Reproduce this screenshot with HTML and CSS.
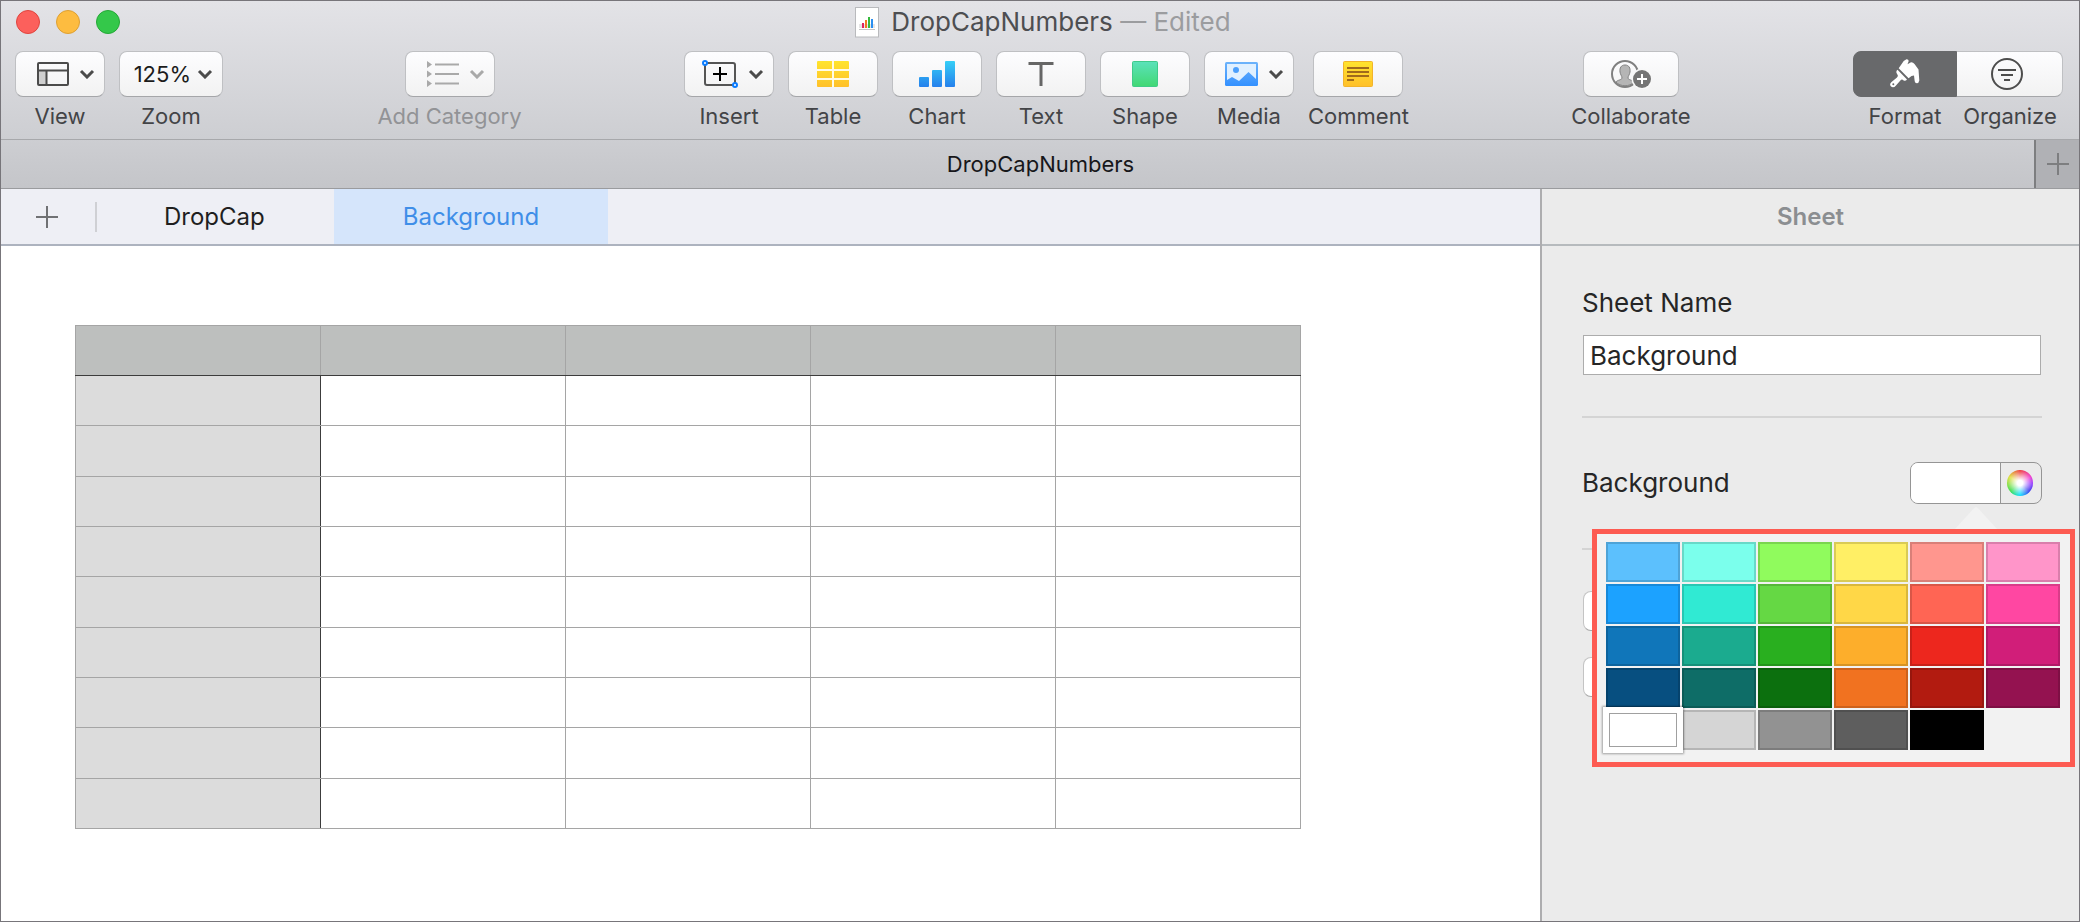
FILE: index.html
```html
<!DOCTYPE html>
<html lang="en">
<head>
<meta charset="utf-8">
<title>DropCapNumbers</title>
<link rel="stylesheet" href="styles.css">
</head>
<body>
<div class="window">
  <header class="chrome">
    <div class="titlebar">
      <div class="lights">
        <button class="light light-close" aria-label="Close"></button>
        <button class="light light-min" aria-label="Minimize"></button>
        <button class="light light-zoom" aria-label="Full screen"></button>
      </div>
      <h1 class="doc-title">
        <svg class="doc-icon" width="24" height="31" viewBox="0 0 24 31"><rect x=".5" y=".5" width="23" height="29.500" fill="#fff" stroke="#b9babd"/><path d="M4 17h16v4H4z" fill="#e6e6e6"/><rect x="7" y="16" width="2" height="5" fill="#e0245e"/><rect x="10" y="13" width="2" height="8" fill="#f07a22"/><rect x="13" y="10" width="2" height="11" fill="#35b93c"/><rect x="16" y="12" width="2" height="9" fill="#2b8ff0"/><path d="M4 22.500h16" stroke="#c4c4c4"/></svg>
        <span>DropCapNumbers <span class="edited">— Edited</span></span>
      </h1>
    </div>
    <div class="toolbar">
      <div class="tools tools-lead">
        <button class="tool"><span class="face face-menu"><svg width="32" height="24" viewBox="0 0 32 24" fill="none" stroke="#4b4b4b" stroke-width="2"><path d="M2 9h7v13H2z" fill="#cfcfcf" stroke="none"/><rect x="1" y="1" width="30" height="22" rx="1"/><path d="M1 8.500h30M9.500 8.500V23"/></svg><svg class="chev" viewBox="0 0 16 10"><path d="M2 2l6 6 6-6"/></svg></span><span class="tool-label">View</span></button>
        <button class="tool"><span class="face face-menu face-zoom">125%<svg class="chev" viewBox="0 0 16 10"><path d="M2 2l6 6 6-6"/></svg></span><span class="tool-label">Zoom</span></button>
      </div>
      <button class="tool tool-off" disabled><span class="face face-menu"><svg width="32" height="26" viewBox="0 0 32 26"><path d="M0 0l5 3.500L0 7zM0 9.500l5 3.500-5 3.500zM0 19l5 3.500L0 26z" fill="#a9a9a9"/><path d="M8 3.500h24M8 13h24M8 22.500h24" stroke="#a9a9a9" stroke-width="2"/></svg><svg class="chev" viewBox="0 0 16 10"><path d="M2 2l6 6 6-6"/></svg></span><span class="tool-label">Add Category</span></button>
      <div class="tools">
        <button class="tool"><span class="face face-menu"><svg width="36" height="28" viewBox="0 0 36 28" fill="none"><rect x="3" y="3" width="30" height="22" rx="2" stroke="#555" stroke-width="2"/><path d="M18 7v14M11 14h14" stroke="#000" stroke-width="2"/><circle cx="3" cy="3" r="2" fill="#fff" stroke="#0a7cff" stroke-width="2"/><circle cx="33" cy="25" r="2" fill="#fff" stroke="#0a7cff" stroke-width="2"/></svg><svg class="chev" viewBox="0 0 16 10"><path d="M2 2l6 6 6-6"/></svg></span><span class="tool-label">Insert</span></button>
        <button class="tool"><span class="face"><svg width="32" height="26" viewBox="0 0 32 26"><defs><linearGradient id="yellow" x2="0" y2="1"><stop stop-color="#ffe42e"/><stop offset="1" stop-color="#ffc02a"/></linearGradient></defs><rect width="32" height="26" rx="1" fill="url(#yellow)"/><path d="M0 9h32M0 18h32M16 0v26" stroke="#fffbe6" stroke-width="2"/></svg></span><span class="tool-label">Table</span></button>
        <button class="tool"><span class="face"><svg width="36" height="26" viewBox="0 0 36 26"><defs><linearGradient id="blue" gradientUnits="userSpaceOnUse" x1="0" y1="0" x2="0" y2="26"><stop stop-color="#36cff7"/><stop offset="1" stop-color="#2580ec"/></linearGradient></defs><g fill="url(#blue)"><rect y="16" width="10" height="10" rx="1"/><rect x="13" y="9" width="10" height="17" rx="1"/><rect x="26" width="10" height="26" rx="1"/></g></svg></span><span class="tool-label">Chart</span></button>
        <button class="tool"><span class="face"><svg width="26" height="24" viewBox="0 0 26 24"><path d="M.5 1.500h25M13 1.500V24" stroke="#666" stroke-width="3"/></svg></span><span class="tool-label">Text</span></button>
        <button class="tool"><span class="face"><svg width="26" height="26" viewBox="0 0 26 26"><defs><linearGradient id="green" x2="0" y2="1"><stop stop-color="#5be2bb"/><stop offset="1" stop-color="#41d873"/></linearGradient></defs><rect x=".5" y=".5" width="25" height="25" rx="1" fill="url(#green)" stroke="#3fcb8a"/></svg></span><span class="tool-label">Shape</span></button>
        <button class="tool"><span class="face face-menu"><svg width="33" height="24" viewBox="0 0 33 24"><defs><linearGradient id="sky" x2="0" y2="1"><stop stop-color="#6db3fb"/><stop offset="1" stop-color="#3390ff"/></linearGradient></defs><rect width="33" height="24" rx="1.500" fill="url(#sky)"/><path d="M2 2h29v15l-7.500-7-9.500 9-7-4-5 3z" fill="#e0f0ff"/><circle cx="11" cy="8" r="3" fill="#4b9ffc"/></svg><svg class="chev" viewBox="0 0 16 10"><path d="M2 2l6 6 6-6"/></svg></span><span class="tool-label">Media</span></button>
        <button class="tool"><span class="face"><svg width="30" height="26" viewBox="0 0 30 26"><rect x=".5" y=".5" width="29" height="25" rx="1" fill="url(#yellow)" stroke="#f2b42c"/><path d="M4 7h22M4 11h22M4 15h22M4 19h7" stroke="#a06a1c" stroke-width="2"/></svg></span><span class="tool-label">Comment</span></button>
      </div>
      <button class="tool"><span class="face face-collab"><svg width="40" height="30" viewBox="0 0 40 30"><circle cx="14" cy="15" r="13" fill="none" stroke="#808080" stroke-width="2"/><path d="M14 6c4 0 5.500 3 5 7-.3 2.500-2 4-2 6s5 2 6 4c-4 5-14 5-18 0 1-2 6-2 6-4s-1.700-3.500-2-6c-.5-4 1-7 5-7z" fill="#b5b5b5" stroke="#808080"/><circle cx="31" cy="20" r="10.500" fill="#f8f8f8"/><circle cx="31" cy="20" r="9" fill="#757575"/><path d="M31 15v10M26 20h10" stroke="#fff" stroke-width="2"/></svg></span><span class="tool-label">Collaborate</span></button>
      <div class="tools tools-joined">
        <button class="tool" aria-pressed="true"><span class="face face-on"><svg width="30" height="30" viewBox="0 0 30 30" fill="#fff"><path d="M8.700 9.300L13.700 2 16.500.2Q18.500 0 18.700 2L17.500 5.300 21 3.200Q23 3 24.500 5L28.500 10.500 29.300 21.500Q28.800 24.300 26.700 24.300 24.500 24 24.600 21.500L24 16.500 21.500 17 18.600 19.200Z"/><path d="M7.500 10.800L17 20.600Q15.500 22.400 13.600 21.500 12 19.800 10.600 21.200L6 26.500Q3.500 29.500 1 27.600-1 25.200 1.500 23L7 18.500Q8.600 17 7.200 15.300 5.300 12.800 7.500 10.800Z"/><circle cx="3.300" cy="25.300" r="1" fill="#68696b"/></svg></span><span class="tool-label">Format</span></button>
        <button class="tool" aria-pressed="false"><span class="face face-last"><svg width="32" height="32" viewBox="0 0 32 32" fill="none" stroke="#4d4d4d" stroke-width="2"><circle cx="16" cy="16" r="15"/><path d="M7 12h18M10 17h12M13 22h6"/></svg></span><span class="tool-label">Organize</span></button>
      </div>
    </div>
    <div class="tabbar">
      <span class="tab-title">DropCapNumbers</span>
      <button class="tab-add" aria-label="New tab"><svg width="22" height="22" viewBox="0 0 22 22"><path d="M11 0v22M0 11h22" stroke="#7d7e80" stroke-width="2"/></svg></button>
    </div>
  </header>
  <div class="workspace">
    <main class="editor">
      <nav class="sheets">
        <button class="sheet-add" aria-label="Add sheet"><svg width="22" height="22" viewBox="0 0 22 22"><path d="M11 0v22M0 11h22" stroke="#707174" stroke-width="2"/></svg></button>
        <button class="sheet">DropCap</button>
        <button class="sheet sheet-active">Background</button>
      </nav>
      <div class="canvas">
        <table class="grid">
          <thead><tr><th></th><th></th><th></th><th></th><th></th></tr></thead>
          <tbody>
            <tr><th></th><td></td><td></td><td></td><td></td></tr>
            <tr><th></th><td></td><td></td><td></td><td></td></tr>
            <tr><th></th><td></td><td></td><td></td><td></td></tr>
            <tr><th></th><td></td><td></td><td></td><td></td></tr>
            <tr><th></th><td></td><td></td><td></td><td></td></tr>
            <tr><th></th><td></td><td></td><td></td><td></td></tr>
            <tr><th></th><td></td><td></td><td></td><td></td></tr>
            <tr><th></th><td></td><td></td><td></td><td></td></tr>
            <tr><th></th><td></td><td></td><td></td><td></td></tr>
          </tbody>
        </table>
      </div>
    </main>
    <aside class="inspector">
      <h2 class="inspector-head">Sheet</h2>
      <div class="panel">
        <label class="field-label" for="sheet-name">Sheet Name</label>
        <input class="field" id="sheet-name" type="text" value="Background">
        <hr class="rule">
        <div class="color-row">
          <span class="field-label" id="bg-label">Background</span>
          <div class="well" role="group" aria-labelledby="bg-label">
            <button class="well-color" aria-label="Background color"></button>
            <button class="well-wheel" aria-label="Color wheel"><span class="wheel"></span></button>
          </div>
          <div class="popover">
            <div class="swatches">
              <button class="swatch c1"></button><button class="swatch c2"></button><button class="swatch c3"></button><button class="swatch c4"></button><button class="swatch c5"></button><button class="swatch c6"></button>
              <button class="swatch c7"></button><button class="swatch c8"></button><button class="swatch c9"></button><button class="swatch c10"></button><button class="swatch c11"></button><button class="swatch c12"></button>
              <button class="swatch c13"></button><button class="swatch c14"></button><button class="swatch c15"></button><button class="swatch c16"></button><button class="swatch c17"></button><button class="swatch c18"></button>
              <button class="swatch c19"></button><button class="swatch c20"></button><button class="swatch c21"></button><button class="swatch c22"></button><button class="swatch c23"></button><button class="swatch c24"></button>
              <button class="swatch swatch-selected"></button><button class="swatch c26"></button><button class="swatch c27"></button><button class="swatch c28"></button><button class="swatch c29"></button>
            </div>
          </div>
        </div>
        <hr class="rule">
        <button class="action" aria-label="Duplicate sheet"></button>
        <button class="action" aria-label="Delete sheet"></button>
      </div>
    </aside>
  </div>
</div>
</body>
</html>
```

FILE: styles.css
```css
* { box-sizing: border-box; }
body { margin: 0; font-family: Inter, "Liberation Sans", sans-serif; color: #262626; }
button { margin: 0; padding: 0; border: 0; background: none; font: inherit; color: inherit; }
h1, h2 { margin: 0; font-weight: 400; }
svg { display: block; flex: none; }

.window { min-height: 100vh; display: flex; flex-direction: column; border: 1px solid #77757a; background: #fff; }

.chrome { background: linear-gradient(#e3e3e7, #cdced2 138px, #c4c5c9); }
.titlebar { position: relative; display: flex; justify-content: center; align-items: center; height: 42px; padding-left: 6px; }
.lights { position: absolute; left: 15px; display: flex; gap: 16px; }
.light { width: 24px; height: 24px; border-radius: 50%; border: 1px solid; }
.light-close { background: #fc605c; border-color: #e0443e; }
.light-min { background: #fdbc40; border-color: #dea032; }
.light-zoom { background: #34c84a; border-color: #24a836; }
.doc-title { display: flex; align-items: center; gap: 12px; font-size: 26px; line-height: 32px; color: #4d4e51; }
.edited { color: #9b9c9f; }

.toolbar { display: flex; justify-content: space-between; padding: 8px 16px 0 14px; height: 96px; }
.tools { display: flex; gap: 14px; }
.tools-lead { margin-right: -8px; }
.tools-joined { gap: 0; }
.tool { display: flex; flex-direction: column; align-items: center; gap: 5px; font-size: 22px; line-height: 28px; color: #434447; }
.face { display: flex; align-items: center; justify-content: center; width: 90px; height: 46px; border: 1px solid #bfc0c3; border-bottom-color: #a5a6a9; border-radius: 8px; background: linear-gradient(#fdfdff, #f2f2f2); }
.face-menu { justify-content: flex-end; gap: 10px; padding-right: 9px; }
.face-zoom { width: 104px; gap: 6px; color: #1c1c1c; }
.face-collab { width: 96px; }
.face-on { width: 104px; border-color: #68696b; border-radius: 8px 0 0 8px; background: #68696b; }
.face-last { width: 106px; padding-right: 6px; border-radius: 0 8px 8px 0; border-left: 0; }
.chev { width: 16px; height: 10px; fill: none; stroke: #4b4b4b; stroke-width: 3; }
.tool-off { color: #929396; }
.tool-off .chev { stroke: #a9a9a9; }

.tabbar { display: flex; align-items: stretch; height: 50px; border-top: 1px solid #a7a8ab; border-bottom: 1px solid #9a9b9e; font-size: 22px; color: #17171a; }
.tab-title { flex: 1; display: flex; align-items: center; justify-content: center; padding-left: 46px; }
.tab-add { display: flex; align-items: center; justify-content: center; width: 45px; border-left: 2px solid #7d7e80; background: #b0b1b5; }

.workspace { flex: 1; display: flex; }
.editor { flex: 1; display: flex; flex-direction: column; }
.sheets { display: flex; align-items: stretch; height: 57px; background: #eeeff5; border-bottom: 2px solid #adb3bf; }
.sheet-add { position: relative; display: flex; align-items: center; justify-content: center; width: 94px; padding-right: 2px; }
.sheet-add::after { content: ""; position: absolute; right: -2px; top: 13px; width: 2px; height: 30px; background: #cfd0d4; }
.sheet { padding: 0 69px; font-size: 24px; color: #1f1f1f; }
.sheet-active { background: #d5e5fb; color: #3f8ee8; }
.canvas { flex: 1; padding: 79px 0 0 74px; }
.grid { width: 1226px; height: 504px; border-collapse: collapse; table-layout: fixed; }
.grid th, .grid td { height: 50px; padding: 0; border: 1px solid #a5a5a5; }
.grid thead th { background: #bdbfbe; border-bottom-color: #3c3c3c; }
.grid tbody th { background: #dcdcdc; border-right-color: #3c3c3c; }

.inspector { width: 539px; border-left: 2px solid #adadaf; background: #ebebeb; }
.inspector-head { display: flex; align-items: center; justify-content: center; height: 57px; border-bottom: 2px solid #b6babd; font-size: 24px; font-weight: 600; color: #8b8e91; }
.panel { display: flex; flex-direction: column; align-items: stretch; padding: 41px 37px 0 40px; }
.field-label { font-size: 26px; line-height: 32px; }
.field { height: 40px; margin: 16px 1px 0; padding: 0 6px; border: 1px solid #acacac; background: #fff; font: inherit; font-size: 26px; color: #262626; }
.rule { width: 100%; height: 2px; margin: 41px 0 0; border: 0; background: #d4d4d4; }
.color-row { position: relative; display: flex; align-items: center; justify-content: space-between; margin-top: 44px; height: 42px; }
.well { display: flex; width: 132px; height: 42px; border: 1px solid #959595; border-radius: 8px; overflow: hidden; }
.well-color { flex: 1; background: #fff; }
.well-wheel { display: flex; align-items: center; justify-content: center; width: 41px; padding-right: 2px; border-left: 1px solid #959595; }
.wheel { width: 26px; height: 26px; border-radius: 50%; background: radial-gradient(#fff 15%, #fff0 72%), conic-gradient(#e33, #e3c 60deg, #93f 90deg, #33e 130deg, #0df 180deg, #3d4 230deg, #dd3 300deg, #e33); }
.popover { position: absolute; z-index: 1; top: 67px; right: -33px; width: 483px; padding: 8px 10px 12px 9px; border: 5px solid #fd5b52; background: #f2f2f2; }
.popover::before { content: ""; position: absolute; left: 358px; top: -27px; width: 42px; height: 22px; background: #f2f2f2; clip-path: polygon(0 100%, 46% 4%, 50% 0, 54% 4%, 100% 100%); }
.swatches { display: grid; grid-template-columns: repeat(6, 1fr); grid-auto-rows: 40px; gap: 2px; }
.swatch { border: 2px solid #00000026; }
.swatch-selected { position: relative; margin: -3px; border: 6px solid #fff; background: #fff; box-shadow: 0 0 2px 1px #00000055, inset 0 0 0 1px #a0a0a0; }
.c1 { background-color: #5cc0fd; } .c2 { background-color: #7bffec; } .c3 { background-color: #90fb5d; } .c4 { background-color: #ffef65; } .c5 { background-color: #ff968e; } .c6 { background-color: #ff95c9; }
.c7 { background-color: #1ca2ff; } .c8 { background-color: #30ead3; } .c9 { background-color: #65d844; } .c10 { background-color: #ffd747; } .c11 { background-color: #ff6554; } .c12 { background-color: #ff47a2; }
.c13 { background-color: #1076ba; } .c14 { background-color: #1bab8f; } .c15 { background-color: #29af1f; } .c16 { background-color: #fdae2b; } .c17 { background-color: #ed271e; } .c18 { background-color: #d11e79; }
.c19 { background-color: #074f80; } .c20 { background-color: #0e6d67; } .c21 { background-color: #0c700e; } .c22 { background-color: #f17220; } .c23 { background-color: #b21b10; } .c24 { background-color: #941250; }
.c26 { background-color: #d5d5d5; } .c27 { background-color: #929292; } .c28 { background-color: #5e5e5e; } .c29 { background-color: #000; }
.color-row + .rule { margin-top: 44px; }
.action { height: 40px; margin: 26px 1px 0; border: 1px solid #c4c4c4; border-bottom-color: #a8a8a8; border-radius: 8px; background: #fff; }
.rule + .action { margin-top: 41px; }
```
